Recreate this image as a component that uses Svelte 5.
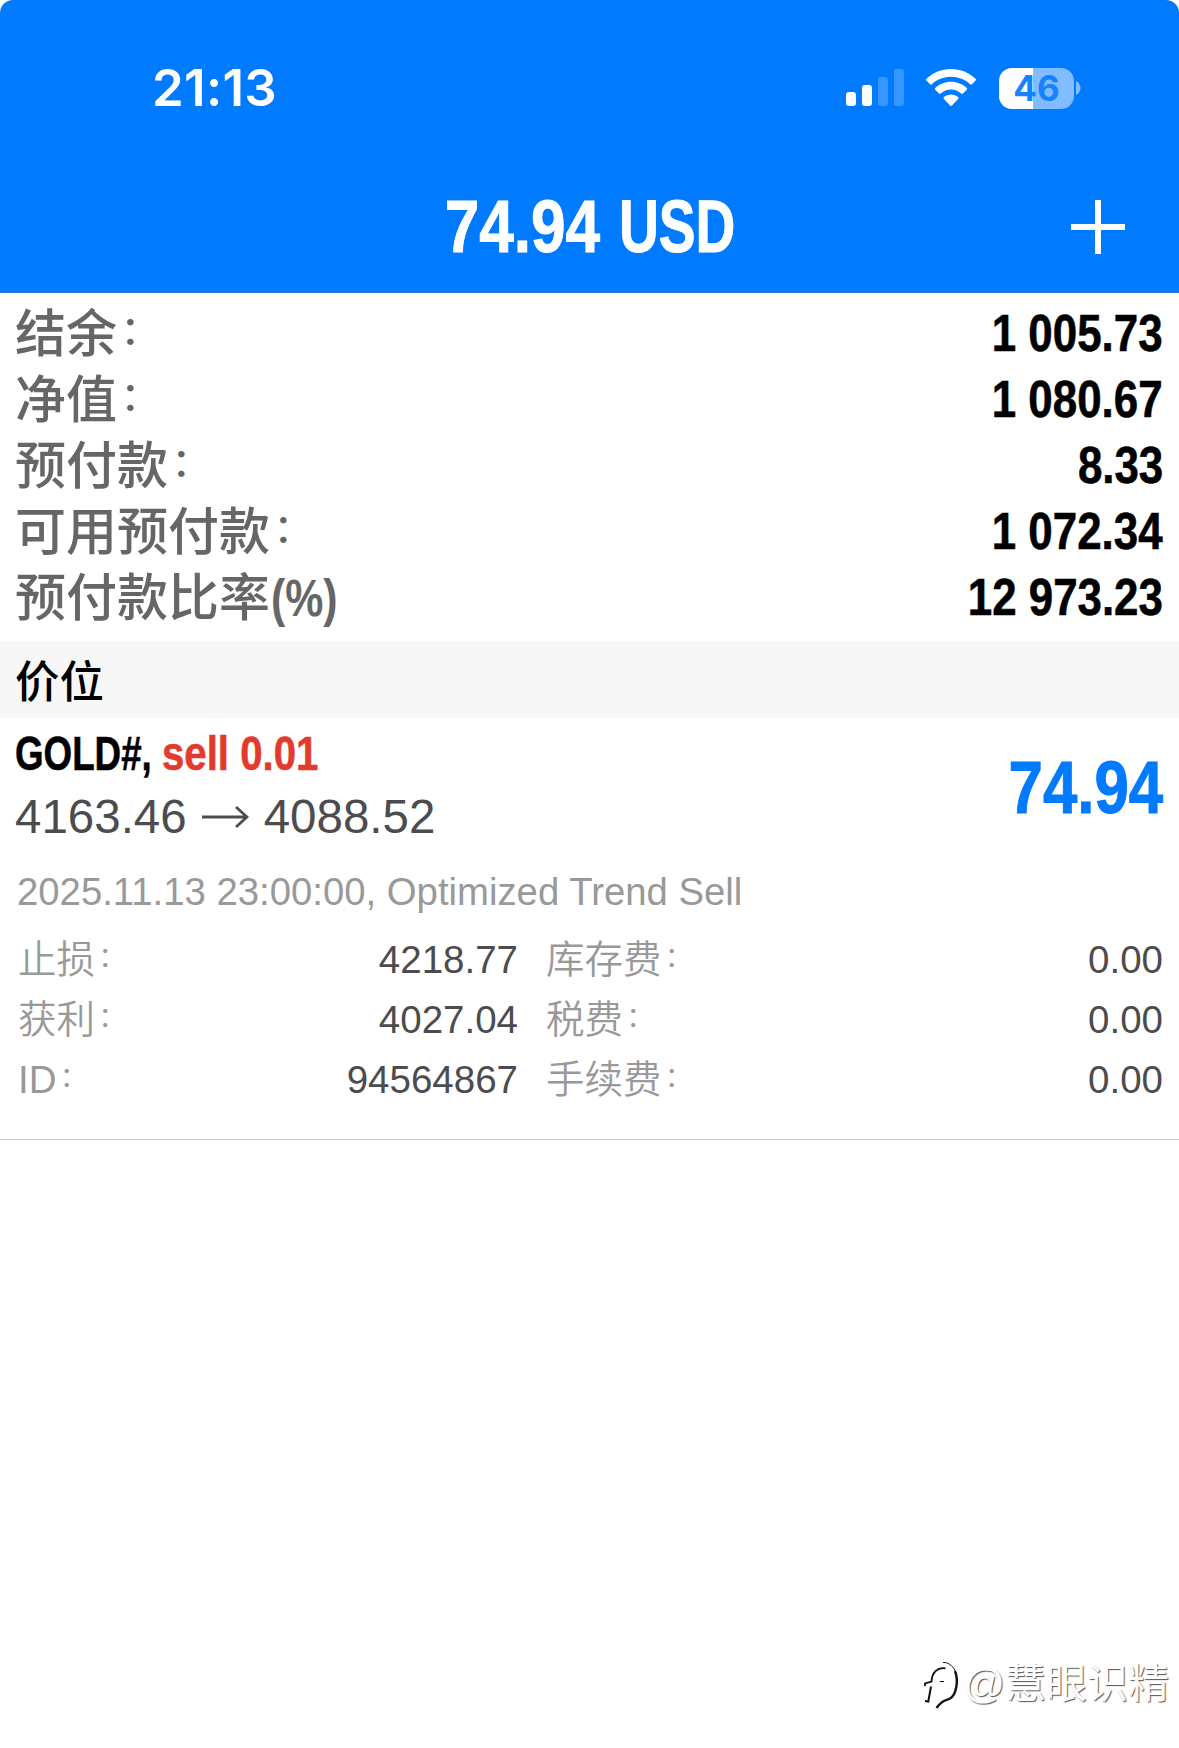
<script>
    const summary = [
        { label: '结余', colon: true, value: '1 005.73' },
        { label: '净值', colon: true, value: '1 080.67' },
        { label: '预付款', colon: true, value: '8.33' },
        { label: '可用预付款', colon: true, value: '1 072.34' },
        { label: '预付款比率', suffix: '(%)', value: '12 973.23' }
    ];

    const details = [
        ['止损', '4218.77', '库存费', '0.00'],
        ['获利', '4027.04', '税费', '0.00'],
        ['ID', '94564867', '手续费', '0.00']
    ];
</script>

<div class="screen">
    <header>
        <div class="status">
            <span class="time">21:13</span>
            <div class="indicators">
                <svg class="signal" width="58" height="38" viewBox="0 0 58 38" fill="#fff">
                    <rect x="0" y="23" width="10" height="14" rx="3" />
                    <rect x="16" y="16" width="10" height="21" rx="3" />
                    <rect x="32" y="8" width="10" height="29" rx="3" opacity=".22" />
                    <rect x="48" y="0" width="10" height="37" rx="3" opacity=".22" />
                </svg>
                <svg class="wifi" width="50" height="38" viewBox="0 0 50 38" fill="#fff">
                    <path d="M25 0C34.5 0 43.2 3.7 49.6 9.8Q50.5 10.7 49.6 11.6L45.9 15.3Q45 16.2 44.1 15.3C39.1 10.6 32.4 7.8 25 7.8S10.9 10.6 5.9 15.3Q5 16.2 4.1 15.3L.4 11.6Q-.5 10.7 .4 9.8C6.8 3.7 15.5 0 25 0Z" />
                    <path d="M25 12.8C31 12.8 36.6 15.1 40.8 18.9Q41.7 19.8 40.8 20.7L37 24.4Q36.1 25.3 35.1 24.4C32.4 22 28.9 20.6 25 20.6S17.6 22 14.9 24.4Q13.9 25.3 13 24.4L9.2 20.7Q8.3 19.8 9.2 18.9C13.4 15.1 19 12.8 25 12.8Z" />
                    <path d="M25 25.6C27.7 25.6 30.2 26.5 32.1 28.1Q33 29 32.1 29.9L26.2 36.3Q25 37.5 23.8 36.3L17.9 29.9Q17 29 17.9 28.1C19.8 26.5 22.3 25.6 25 25.6Z" />
                </svg>
                <div class="battery">
                    <div class="level">46</div>
                    <svg width="5" height="14" viewBox="0 0 5 14" fill="#fff" opacity=".5">
                        <path d="M0 0C6 3 6 11 0 14Z" />
                    </svg>
                </div>
            </div>
        </div>
        <div class="nav">
            <h1><span class="amount">74.94</span> <span class="currency">USD</span></h1>
            <button aria-label="+">
                <svg width="54" height="54" viewBox="0 0 54 54" stroke="#fff" stroke-width="6">
                    <path d="M27 0V54M0 27H54" />
                </svg>
            </button>
        </div>
    </header>

    <section class="summary">
        {#each summary as row}
            <div class="row">
                <span class="label">{row.label}{#if row.colon}<span class="colon">：</span>{/if}{#if row.suffix}<span class="suffix">{row.suffix}</span>{/if}</span>
                <span class="value">{row.value}</span>
            </div>
        {/each}
    </section>

    <h2>价位</h2>

    <section class="position">
        <div class="main">
            <div>
                <div class="symbol">
                    <span class="ticker">GOLD#,</span>
                    <span class="side">sell 0.01</span>
                </div>
                <div class="prices">
                    4163.46
                    <svg width="47" height="24" viewBox="0 0 47 24" fill="none" stroke="#4c4c4e" stroke-width="2.8">
                        <path d="M0 12H44M34 2L45 12L34 22" />
                    </svg>
                    4088.52
                </div>
            </div>
            <div class="profit">74.94</div>
        </div>
        <div class="comment">2025.11.13 23:00:00, Optimized Trend Sell</div>
        <div class="details">
            {#each details as [left, leftValue, right, rightValue]}
                <span class="name">{left}<span class="colon">：</span></span>
                <span class="number">{leftValue}</span>
                <span class="name second">{right}<span class="colon">：</span></span>
                <span class="number">{rightValue}</span>
            {/each}
        </div>
    </section>

    <footer>
        <svg width="36" height="50" viewBox="0 0 36 50" fill="none" stroke="#111">
            <path stroke-width="1.8" d="M1 27V24.5L7.5 22.5C8 14 13 8 21.5 9.3" />
            <path stroke-width="1" d="M19 3.5C25 3 30 8 32 14" />
            <path stroke-width="2.4" d="M31 12C35 22 32 36 26 39.5C22 42 19 40 12.5 49" />
            <path stroke-width="2" d="M7 27.5L4.3 42.5L1 42" />
            <path stroke-width="1" d="M15.7 22.5H20" />
        </svg>
        <span>@慧眼识精</span>
    </footer>
</div>

<style>
    :global(body) {
        background: #fff;
    }

    .screen {
        display: flex;
        flex-direction: column;
        height: 1748px;
        overflow: hidden;
        font-family: "Liberation Sans", "Noto Sans CJK SC", sans-serif;
        background: #fff;
    }

    header {
        height: 293px;
        box-sizing: border-box;
        padding-top: 56px;
        background: #007aff;
        border-bottom: 1px solid #2f74cf;
        border-radius: 13px 13px 0 0;
        color: #fff;
    }

    .status {
        display: flex;
        justify-content: space-between;
        align-items: center;
        height: 64px;
        padding: 0 98px 0 152px;
    }

    .time {
        font: 600 51px/64px Inter, sans-serif;
        letter-spacing: 0.3px;
    }

    .indicators {
        display: flex;
        align-items: center;
    }

    .wifi {
        margin-left: 22px;
    }

    .battery {
        display: flex;
        align-items: center;
        gap: 2px;
        margin-left: 23px;
    }

    .level {
        width: 75px;
        height: 41px;
        border-radius: 13px;
        background: linear-gradient(90deg, #fff 46%, #80bcff 46%);
        color: #1583ff;
        font: 700 35px/41px Inter, sans-serif;
        text-align: center;
    }

    .nav {
        display: grid;
        grid-template-columns: 1fr auto 1fr;
        align-items: center;
        height: 112px;
        margin-top: 50px;
    }

    h1 {
        grid-column: 2;
        display: flex;
        gap: 19px;
        margin: 0;
        padding-left: 11px;
        font-size: 74px;
        line-height: 114px;
        white-space: nowrap;
        -webkit-text-stroke: 1px;
    }

    .amount {
        transform: scaleX(0.84);
        transform-origin: right;
    }

    .currency {
        transform: scaleX(0.745);
        transform-origin: left;
    }

    button {
        justify-self: end;
        margin-right: 54px;
        padding: 0;
        border: 0;
        background: none;
        line-height: 0;
    }

    .summary {
        padding: 7px 16px 11px 15px;
    }

    .row {
        display: flex;
        justify-content: space-between;
        height: 66px;
        font-size: 51px;
    }

    .label {
        color: #666;
        font-family: "Noto Sans CJK SC", sans-serif;
        font-weight: 500;
        line-height: 61px;
    }

    .colon {
        margin-left: 0.1em;
        font-size: 0.75em;
        line-height: 0;
        vertical-align: 0.2em;
    }

    .suffix {
        display: inline-block;
        margin-left: 1px;
        font-family: "Liberation Sans", sans-serif;
        font-weight: 700;
        line-height: 1;
        transform: scaleX(0.84);
        transform-origin: left;
    }

    .value {
        font-weight: 700;
        line-height: 68px;
        transform: scaleX(0.86);
        transform-origin: right;
        -webkit-text-stroke: 0.6px;
    }

    h2 {
        height: 77px;
        margin: 0;
        padding-left: 15px;
        background: #f7f7f7;
        font: 500 44.5px/75px "Noto Sans CJK SC", sans-serif;
    }

    .main {
        display: flex;
        justify-content: space-between;
        height: 138px;
        padding: 3px 16px 0 15px;
    }

    .symbol {
        display: flex;
        height: 63px;
        font-size: 49px;
        font-weight: 700;
        line-height: 64px;
        white-space: nowrap;
        -webkit-text-stroke: 0.6px;
    }

    .ticker {
        transform: scaleX(0.75);
        transform-origin: left;
    }

    .side {
        margin-left: -35px;
        color: #e23b2e;
        transform: scaleX(0.82);
        transform-origin: left;
    }

    .prices {
        display: flex;
        align-items: center;
        gap: 15px;
        color: #4c4c4e;
        font-size: 47.5px;
        line-height: 65px;
    }

    .profit {
        color: #007aff;
        font-size: 74px;
        font-weight: 700;
        line-height: 134px;
        transform: scaleX(0.835);
        transform-origin: right;
        -webkit-text-stroke: 1px;
    }

    .comment {
        height: 68px;
        padding-left: 17px;
        color: #999;
        font-size: 38.3px;
        line-height: 66px;
        white-space: nowrap;
    }

    .details {
        display: grid;
        grid-template-columns: 200px 300px 1fr 200px;
        grid-auto-rows: 60px;
        padding: 3px 16px 29px 18px;
        border-bottom: 1px solid #c8c8c8;
        line-height: 60px;
        font-size: 38.5px;
    }

    .name {
        color: #999;
        font-weight: 350;
        white-space: nowrap;
    }

    .second {
        padding-left: 28px;
    }

    .number {
        color: #4c4c4e;
        text-align: right;
    }

    footer {
        display: flex;
        align-items: center;
        justify-content: flex-end;
        gap: 3px;
        margin-top: auto;
        padding: 0 10px 34px 0;
        color: #fff;
        font-size: 41px;
        line-height: 60px;
        text-shadow: 1px 1px 1px #555;
    }
</style>
